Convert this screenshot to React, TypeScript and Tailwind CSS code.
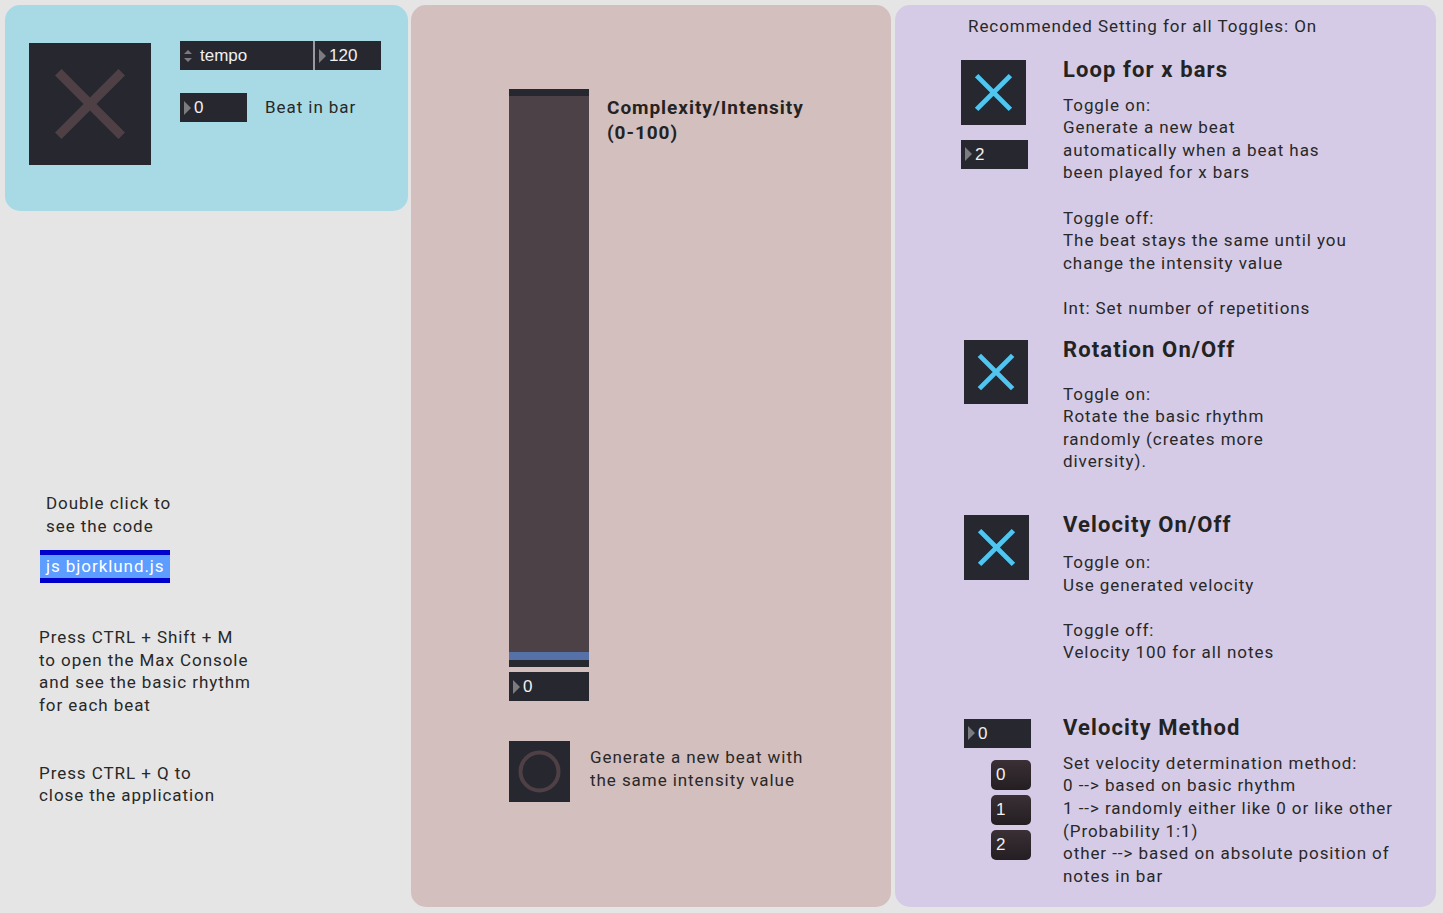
import type { ReactNode } from 'react';

const FONT = "font-['Roboto','Noto_Sans',sans-serif]";
const UI_FONT = "font-['Liberation_Sans','Arial',sans-serif]";

function XToggle({ size, color }: { size: string; color: string }) {
  return (
    <div className={`${size} shrink-0 bg-[#272730]`}>
      <svg viewBox="0 0 100 100" className="size-full">
        <path d="M24 24 L76 76 M76 24 L24 76" stroke={color} strokeWidth="7.5" fill="none" />
      </svg>
    </div>
  );
}

function NumBox({ value, w = 'w-[67px]' }: { value: string; w?: string }) {
  return (
    <div className={`flex h-[29px] ${w} shrink-0 items-center bg-[#272730] pl-[4px] ${UI_FONT}`}>
      <svg width="7" height="14" viewBox="0 0 7 14" className="shrink-0">
        <path d="M0 0 L7 7 L0 14 Z" fill="#7b7b80" />
      </svg>
      <span className="ml-[3px] text-[17px] leading-none text-[#f0f0f0]">{value}</span>
    </div>
  );
}

function MsgBox({ value }: { value: string }) {
  return (
    <div
      className={`flex h-[30px] w-[40px] items-center rounded-[5px] bg-gradient-to-b from-[#3a3035] to-[#241e22] pl-[5px] text-[17px] text-[#f0f0f0] ${UI_FONT}`}
    >
      {value}
    </div>
  );
}

function Lines({ children, className = '' }: { children: ReactNode; className?: string }) {
  return (
    <div className={`whitespace-pre text-[17px] leading-[22.6px] tracking-[0.055em] text-[#282828] ${className}`}>
      {children}
    </div>
  );
}

function Heading({ children }: { children: ReactNode }) {
  return (
    <div className="text-[22px] font-bold leading-[26px] tracking-[0.05em] text-[#232323]">{children}</div>
  );
}

export default function App() {
  return (
    <div className={`flex h-[913px] w-[1443px] bg-[#e5e5e5] pt-[5px] ${FONT}`}>
      {/* left column */}
      <div className="ml-[5px] flex w-[403px] flex-col">
        <div className="flex h-[206px] rounded-[15px] bg-[#a8dae6] pl-[24px] pt-[38px]">
          <XToggle size="size-[122px]" color="#4f4046" />
          <div className="ml-[29px] mt-[-2px] flex flex-col">
            <div className="flex items-center">
              <div className={`flex h-[29px] w-[133px] items-center bg-[#272730] pl-[3px] ${UI_FONT}`}>
                <svg width="10" height="16" viewBox="0 0 10 16">
                  <path d="M1 6 L5 2 L9 6 Z M1 10 L5 14 L9 10 Z" fill="#7b7b80" />
                </svg>
                <span className="ml-[7px] text-[17px] leading-none text-[#f0f0f0]">tempo</span>
              </div>
              <div className="h-[29px] w-[2px] bg-[#9a9aa0]" />
              <NumBox value="120" w="w-[66px]" />
            </div>
            <div className="mt-[23px] flex items-center">
              <NumBox value="0" />
              <span className="ml-[18px] text-[17px] tracking-[0.055em] text-[#282828]">Beat in bar</span>
            </div>
          </div>
        </div>

        <Lines className="ml-[41px] mt-[281px]">{'Double click to\nsee the code'}</Lines>
        <div className="ml-[35px] mt-[13px] flex h-[33px] w-[130px] items-center border-y-[5px] border-[#0000cc] bg-[#5c9dff] pl-[6px] text-[17px] tracking-[0.055em] text-white">
          js bjorklund.js
        </div>
        <Lines className="ml-[34px] mt-[43px]">
          {'Press CTRL + Shift + M\nto open the Max Console\nand see the basic rhythm\nfor each beat'}
        </Lines>
        <Lines className="ml-[34px] mt-[45px]">{'Press CTRL + Q to\nclose the application'}</Lines>
      </div>

      {/* middle panel */}
      <div className="ml-[3px] flex h-[902px] w-[480px] flex-col rounded-[15px] bg-[#d4bfbf] pl-[98px] pt-[84px]">
        <div className="flex">
          <div className="flex w-[80px] flex-col">
            <div className="h-[7px] bg-[#272730]" />
            <div className="h-[556px] bg-[#4d4148]" />
            <div className="h-[8px] bg-[#5571a7]" />
            <div className="h-[7px] bg-[#272730]" />
          </div>
          <div className="ml-[18px] mt-[6px] text-[19px] font-bold leading-[25px] tracking-[0.05em] text-[#232323]">
            Complexity/Intensity
            <br />
            (0-100)
          </div>
        </div>
        <div className="mt-[5px]">
          <NumBox value="0" w="w-[80px]" />
        </div>
        <div className="mt-[40px] flex">
          <div className="size-[61px] bg-[#272730]">
            <svg viewBox="0 0 61 61" className="size-full">
              <circle cx="30.5" cy="30.5" r="19" stroke="#4f4046" strokeWidth="4" fill="none" />
            </svg>
          </div>
          <Lines className="ml-[20px] mt-[5px]">{'Generate a new beat with\nthe same intensity value'}</Lines>
        </div>
      </div>

      {/* right panel */}
      <div className="ml-[4px] flex h-[902px] w-[541px] flex-col rounded-[15px] bg-[#d5cbe6] pl-[66px] pt-[10px]">
        <Lines className="ml-[7px]">Recommended Setting for all Toggles: On</Lines>

        <div className="mt-[19px] flex">
          <div className="flex w-[102px] flex-col">
            <div className="mt-[3px]">
              <XToggle size="size-[65px]" color="#4fc5f0" />
            </div>
            <div className="mt-[15px]">
              <NumBox value="2" />
            </div>
          </div>
          <div>
            <Heading>Loop for x bars</Heading>
            <Lines className="mt-[11px]">
              {'Toggle on:\nGenerate a new beat\nautomatically when a beat has\nbeen played for x bars\n\nToggle off:\nThe beat stays the same until you\nchange the intensity value\n\nInt: Set number of repetitions'}
            </Lines>
          </div>
        </div>

        <div className="mt-[17px] flex">
          <div className="w-[102px] pl-[3px] pt-[3px]">
            <XToggle size="size-[64px]" color="#4fc5f0" />
          </div>
          <div>
            <Heading>Rotation On/Off</Heading>
            <Lines className="mt-[20px]">
              {'Toggle on:\nRotate the basic rhythm\nrandomly (creates more\ndiversity).'}
            </Lines>
          </div>
        </div>

        <div className="mt-[39px] flex">
          <div className="w-[102px] pl-[3px] pt-[3px]">
            <XToggle size="size-[65px]" color="#4fc5f0" />
          </div>
          <div>
            <Heading>Velocity On/Off</Heading>
            <Lines className="mt-[13px]">
              {'Toggle on:\nUse generated velocity\n\nToggle off:\nVelocity 100 for all notes'}
            </Lines>
          </div>
        </div>

        <div className="mt-[51px] flex">
          <div className="flex w-[102px] flex-col pl-[3px] pt-[4px]">
            <NumBox value="0" />
            <div className="ml-[27px] mt-[12px] flex flex-col gap-[5px]">
              <MsgBox value="0" />
              <MsgBox value="1" />
              <MsgBox value="2" />
            </div>
          </div>
          <div>
            <Heading>Velocity Method</Heading>
            <Lines className="mt-[11px]">
              {'Set velocity determination method:\n0 --> based on basic rhythm\n1 --> randomly either like 0 or like other\n(Probability 1:1)\nother --> based on absolute position of\nnotes in bar'}
            </Lines>
          </div>
        </div>
      </div>
    </div>
  );
}
